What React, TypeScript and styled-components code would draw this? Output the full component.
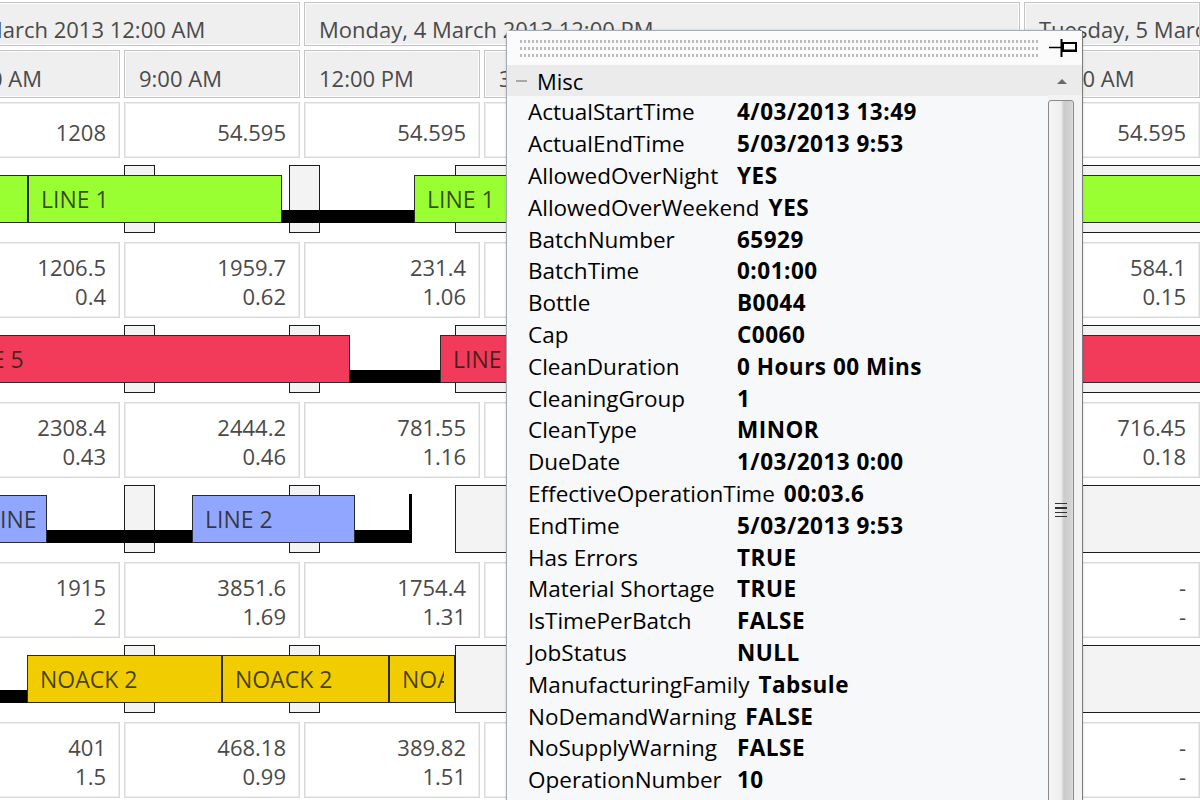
import React from "react"
import styled, { createGlobalStyle } from "styled-components"

const GlobalStyle = createGlobalStyle`
  html, body {
    margin: 0;
    padding: 0;
    background: #fff;
  }
  body {
    width: 1200px;
    height: 800px;
    overflow: hidden;
    font-family: "Open Sans", "Noto Sans", sans-serif;
  }
`

// chart is scrolled: the first slot starts off screen
const ORIGIN = -58
const SLOT = 180

type Span = [number, number]
type BarData = { from: number; to: number; label: string }

type GanttData = {
  color: string
  tabs: Span[]
  bars: BarData[]
  links: Span[]
  ticks?: Span[]
}

const times = ["6:00 AM", "9:00 AM", "12:00 PM", "3:00 PM", "6:00 PM", "9:00 PM", "12:00 AM"]

// slots 3-5 sit under the property window
const numberRows: string[][][] = [
  [["1208"], ["54.595"], ["54.595"], [], [], [], ["54.595"]],
  [["1206.5", "0.4"], ["1959.7", "0.62"], ["231.4", "1.06"], [], [], [], ["584.1", "0.15"]],
  [["2308.4", "0.43"], ["2444.2", "0.46"], ["781.55", "1.16"], [], [], [], ["716.45", "0.18"]],
  [["1915", "2"], ["3851.6", "1.69"], ["1754.4", "1.31"], [], [], [], ["-", "-"]],
  [["401", "1.5"], ["468.18", "0.99"], ["389.82", "1.51"], [], [], [], ["-", "-"]],
]

const gantt: GanttData[] = [
  {
    color: "#99ff33",
    tabs: [[124, 155], [289, 320], [455, 560], [1030, 1215]],
    bars: [
      { from: -150, to: 28, label: "" },
      { from: 28, to: 282, label: "LINE 1" },
      { from: 414, to: 640, label: "LINE 1" },
      { from: 990, to: 1215, label: "LINE 1" },
    ],
    links: [[282, 414]],
  },
  {
    color: "#f23b5b",
    tabs: [[124, 155], [289, 320], [455, 560], [1030, 1215]],
    bars: [
      { from: -57, to: 350, label: "LINE 5" },
      { from: 440, to: 640, label: "LINE 5" },
      { from: 990, to: 1215, label: "LINE 5" },
    ],
    links: [[350, 440]],
  },
  {
    color: "#91a7ff",
    tabs: [[124, 155], [289, 320], [455, 1215]],
    bars: [
      { from: -25, to: 47, label: "LINE 2" },
      { from: 192, to: 355, label: "LINE 2" },
    ],
    links: [[47, 192], [355, 412]],
    ticks: [[409, 412]],
  },
  {
    color: "#f0cc00",
    tabs: [[124, 155], [289, 320], [455, 1215]],
    bars: [
      { from: 27, to: 222, label: "NOACK 2" },
      { from: 222, to: 389, label: "NOACK 2" },
      { from: 389, to: 455, label: "NOACK 2" },
    ],
    links: [[-60, 27]],
  },
]

const properties: [string, string][] = [
  ["ActualStartTime", "4/03/2013 13:49"],
  ["ActualEndTime", "5/03/2013 9:53"],
  ["AllowedOverNight", "YES"],
  ["AllowedOverWeekend", "YES"],
  ["BatchNumber", "65929"],
  ["BatchTime", "0:01:00"],
  ["Bottle", "B0044"],
  ["Cap", "C0060"],
  ["CleanDuration", "0 Hours 00 Mins"],
  ["CleaningGroup", "1"],
  ["CleanType", "MINOR"],
  ["DueDate", "1/03/2013 0:00"],
  ["EffectiveOperationTime", "00:03.6"],
  ["EndTime", "5/03/2013 9:53"],
  ["Has Errors", "TRUE"],
  ["Material Shortage", "TRUE"],
  ["IsTimePerBatch", "FALSE"],
  ["JobStatus", "NULL"],
  ["ManufacturingFamily", "Tabsule"],
  ["NoDemandWarning", "FALSE"],
  ["NoSupplyWarning", "FALSE"],
  ["OperationNumber", "10"],
]

const Screen = styled.div`
  position: relative;
  width: 1200px;
  height: 800px;
  overflow: hidden;
  background: #fff;
`

const Chart = styled.div`
  display: flex;
  flex-direction: column;
  margin-left: ${ORIGIN}px;
  width: ${SLOT * 7}px;
  color: #4a4a4a;
  font-size: 22px;
`

const HeaderRow = styled.div<{ $height: number }>`
  display: flex;
  height: ${(p) => p.$height}px;
`

const HeaderCell = styled.div<{ $slots: number; $indent?: number; $lift: number }>`
  flex: none;
  width: ${(p) => p.$slots * SLOT - 4}px;
  margin: 2px;
  box-sizing: border-box;
  background: #efefef;
  border: 1px solid #c4c4c4;
  box-shadow: inset 0 0 0 1px #fbfbfb;
  padding: ${(p) => p.$lift}px 0 0 14px;
  display: flex;
  align-items: center;
  white-space: nowrap;
  overflow: hidden;

  span {
    margin-left: ${(p) => p.$indent ?? 0}px;
  }
`

const NumberRow = styled.div<{ $height: number }>`
  display: flex;
  height: ${(p) => p.$height}px;
`

const NumberCell = styled.div`
  flex: none;
  width: ${SLOT - 4}px;
  margin: 2px;
  box-sizing: border-box;
  background: #fff;
  border: 1px solid #d9d9d9;
  box-shadow: inset 0 0 0 1px #eeeeee;
  padding: 4px 13px 0 0;
  display: flex;
  flex-direction: column;
  justify-content: center;
  align-items: flex-end;
  line-height: 29px;
`

const GanttRow = styled.div`
  position: relative;
  height: 80px;
`

const Tab = styled.div`
  position: absolute;
  top: 5px;
  height: 68px;
  box-sizing: border-box;
  background: #f3f3f3;
  border: 1.5px solid #1c1c1c;
`

const Bar = styled.div<{ $color: string }>`
  position: absolute;
  top: 15px;
  height: 48px;
  box-sizing: border-box;
  background: ${(p) => p.$color};
  border: 1px solid #2b2b2b;
  padding: 0 10px 0 12px;
  line-height: 46px;
  color: rgba(25, 25, 10, 0.78);
  font-size: 23px;
`

const BarLabel = styled.span`
  display: block;
  overflow: hidden;
  white-space: nowrap;
`

const Link = styled.div`
  position: absolute;
  top: 50px;
  height: 13px;
  background: #000;
`

const Tick = styled.div`
  position: absolute;
  top: 14px;
  height: 49px;
  background: #000;
`

const Panel = styled.div`
  position: absolute;
  left: 506px;
  top: 30px;
  width: 577px;
  height: 800px;
  box-sizing: border-box;
  display: flex;
  flex-direction: column;
  background: #f7f8fa;
  border: 1.5px solid #a3abb4;
  border-right-color: #7b7b7b;
  border-radius: 5px 5px 0 0;
  box-shadow: 0 0 3px rgba(0, 0, 0, 0.15);
  font-family: "Open Sans", "Noto Sans", sans-serif;
  color: #000;
`

const TitleBar = styled.div`
  flex: none;
  height: 34px;
  display: flex;
  align-items: center;
  padding: 0 4px 0 12px;
  background: #fbfbfc;
`

const Grip = styled.div`
  flex: 1;
  height: 22px;
  margin-right: 10px;
  background-image: radial-gradient(circle, #b9b9b9 1.1px, transparent 1.5px);
  background-size: 4px 7px;
  background-position: 0 1px;
`

const PinButton = styled.div`
  flex: none;
  width: 30px;
  height: 22px;
  display: flex;
  align-items: center;
  justify-content: center;
`

const PanelBody = styled.div`
  flex: 1;
  display: flex;
  min-height: 0;
`

const PropList = styled.div`
  flex: 1;
  display: flex;
  flex-direction: column;
`

const Category = styled.div`
  height: 31px;
  flex: none;
  display: flex;
  align-items: center;
  padding-left: 9px;
  background: #ebebeb;
  font-size: 22px;
`

const Collapse = styled.span`
  width: 11px;
  height: 2px;
  margin-right: 10px;
  background: #a8a8a8;
`

const PropRow = styled.div`
  height: 31.8px;
  flex: none;
  display: flex;
  align-items: center;
  padding-left: 21px;
  font-size: 22.5px;
  white-space: nowrap;
`

const PropName = styled.span`
  min-width: 209px;
  box-sizing: border-box;
  padding-right: 9px;
`

const PropValue = styled.span`
  font-weight: 700;
  letter-spacing: 0.5px;
`

const ScrollBar = styled.div`
  flex: none;
  width: 34px;
  display: flex;
  flex-direction: column;
  background: #f3f3f4;
`

const ScrollTop = styled.div`
  flex: none;
  height: 35px;
  display: flex;
  justify-content: center;
  padding-top: 14px;
  box-sizing: border-box;
  padding-right: 6px;
  background: linear-gradient(#ebebeb 0, #ebebeb 30px, #f3f3f4 30px);
`

const UpArrow = styled.span`
  width: 0;
  height: 0;
  border-left: 5px solid transparent;
  border-right: 5px solid transparent;
  border-bottom: 5px solid #6a6a6a;
`

const Thumb = styled.div`
  flex: none;
  height: 820px;
  width: 26px;
  box-sizing: border-box;
  border: 1.5px solid #8a8a8a;
  border-radius: 3px;
  background: linear-gradient(to right, #f5f5f5 0%, #eeeeee 50%, #cbcbcb 62%, #d2d2d2 90%, #dedede 100%);
  display: flex;
  justify-content: center;
`

const ThumbGrip = styled.div`
  margin-top: 402px;
  width: 12px;
  height: 14px;
  background: repeating-linear-gradient(
    to bottom,
    #333 0,
    #333 1.5px,
    transparent 1.5px,
    transparent 4.5px
  );
`

const x = (screenX: number) => screenX - ORIGIN

const Gantt: React.FC<{ data: GanttData }> = ({ data }) => (
  <GanttRow>
    {data.tabs.map(([a, b], i) => (
      <Tab key={`t${i}`} style={{ left: x(a), width: b - a }} />
    ))}
    {data.bars.map((bar, i) => (
      <Bar key={`b${i}`} $color={data.color} style={{ left: x(bar.from), width: bar.to - bar.from }}>
        <BarLabel>{bar.label}</BarLabel>
      </Bar>
    ))}
    {data.links.map(([a, b], i) => (
      <Link key={`l${i}`} style={{ left: x(a), width: b - a }} />
    ))}
    {(data.ticks ?? []).map(([a, b], i) => (
      <Tick key={`k${i}`} style={{ left: x(a), width: b - a }} />
    ))}
  </GanttRow>
)

const Numbers: React.FC<{ cells: string[][]; height: number }> = ({ cells, height }) => (
  <NumberRow $height={height}>
    {cells.map((lines, i) => (
      <NumberCell key={i}>
        {lines.map((v, j) => (
          <span key={j}>{v}</span>
        ))}
      </NumberCell>
    ))}
  </NumberRow>
)

const PinIcon = () => (
  <svg width="30" height="20" viewBox="0 0 30 20">
    <path d="M1 9.5H13" stroke="#000" strokeWidth="1.5" />
    <path d="M13.5 1V19" stroke="#000" strokeWidth="2" />
    <rect x="15" y="5" width="13" height="8" fill="none" stroke="#000" strokeWidth="2" />
    <path d="M15 12.5H28" stroke="#000" strokeWidth="2" />
  </svg>
)

export default function App() {
  return (
    <Screen>
      <GlobalStyle />
      <Chart>
        <HeaderRow $height={48}>
          <HeaderCell $slots={2} $indent={-89} $lift={9}>
            <span>Monday, 4 March 2013 12:00 AM</span>
          </HeaderCell>
          <HeaderCell $slots={4} $lift={9}>
            <span>Monday, 4 March 2013 12:00 PM</span>
          </HeaderCell>
          <HeaderCell $slots={1} $lift={9}>
            <span>Tuesday, 5 March 2013 12:00 AM</span>
          </HeaderCell>
        </HeaderRow>
        <HeaderRow $height={52}>
          {times.map((t) => (
            <HeaderCell key={t} $slots={1} $lift={8}>
              <span>{t}</span>
            </HeaderCell>
          ))}
        </HeaderRow>
        <Numbers cells={numberRows[0]} height={60} />
        {gantt.map((g, i) => (
          <React.Fragment key={i}>
            <Gantt data={g} />
            <Numbers cells={numberRows[i + 1]} height={80} />
          </React.Fragment>
        ))}
      </Chart>

      <Panel>
        <TitleBar>
          <Grip />
          <PinButton>
            <PinIcon />
          </PinButton>
        </TitleBar>
        <PanelBody>
          <PropList>
            <Category>
              <Collapse />
              Misc
            </Category>
            {properties.map(([name, value]) => (
              <PropRow key={name}>
                <PropName>{name}</PropName>
                <PropValue>{value}</PropValue>
              </PropRow>
            ))}
          </PropList>
          <ScrollBar>
            <ScrollTop>
              <UpArrow />
            </ScrollTop>
            <Thumb>
              <ThumbGrip />
            </Thumb>
          </ScrollBar>
        </PanelBody>
      </Panel>
    </Screen>
  )
}
